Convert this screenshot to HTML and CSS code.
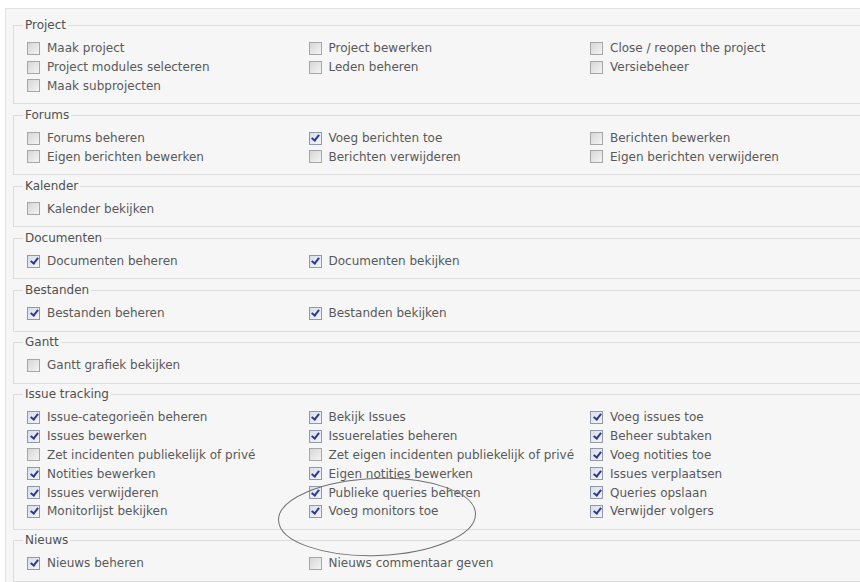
FILE: index.html
```html
<!DOCTYPE html>
<html lang="nl">
<head>
    <meta charset="UTF-8">
    <meta name="viewport" content="width=device-width, initial-scale=1.0">
    <title>Rechten</title>
    <link rel="stylesheet" href="styles.css">
</head>
<body>
<div class="permissions">
    <fieldset class="group">
        <legend>Project</legend>
        <div class="perm-grid">
            <label class="perm"><span class="box"></span>Maak project</label>
            <label class="perm"><span class="box"></span>Project bewerken</label>
            <label class="perm"><span class="box"></span>Close / reopen the project</label>
            <label class="perm"><span class="box"></span>Project modules selecteren</label>
            <label class="perm"><span class="box"></span>Leden beheren</label>
            <label class="perm"><span class="box"></span>Versiebeheer</label>
            <label class="perm"><span class="box"></span>Maak subprojecten</label>
        </div>
    </fieldset>

    <fieldset class="group">
        <legend>Forums</legend>
        <div class="perm-grid">
            <label class="perm"><span class="box"></span>Forums beheren</label>
            <label class="perm"><span class="box on"></span>Voeg berichten toe</label>
            <label class="perm"><span class="box"></span>Berichten bewerken</label>
            <label class="perm"><span class="box"></span>Eigen berichten bewerken</label>
            <label class="perm"><span class="box"></span>Berichten verwijderen</label>
            <label class="perm"><span class="box"></span>Eigen berichten verwijderen</label>
        </div>
    </fieldset>

    <fieldset class="group">
        <legend>Kalender</legend>
        <div class="perm-grid">
            <label class="perm"><span class="box"></span>Kalender bekijken</label>
        </div>
    </fieldset>

    <fieldset class="group">
        <legend>Documenten</legend>
        <div class="perm-grid">
            <label class="perm"><span class="box on"></span>Documenten beheren</label>
            <label class="perm"><span class="box on"></span>Documenten bekijken</label>
        </div>
    </fieldset>

    <fieldset class="group">
        <legend>Bestanden</legend>
        <div class="perm-grid">
            <label class="perm"><span class="box on"></span>Bestanden beheren</label>
            <label class="perm"><span class="box on"></span>Bestanden bekijken</label>
        </div>
    </fieldset>

    <fieldset class="group">
        <legend>Gantt</legend>
        <div class="perm-grid">
            <label class="perm"><span class="box"></span>Gantt grafiek bekijken</label>
        </div>
    </fieldset>

    <fieldset class="group">
        <legend>Issue tracking</legend>
        <div class="perm-grid">
            <label class="perm"><span class="box on"></span>Issue-categorieën beheren</label>
            <label class="perm"><span class="box on"></span>Bekijk Issues</label>
            <label class="perm"><span class="box on"></span>Voeg issues toe</label>
            <label class="perm"><span class="box on"></span>Issues bewerken</label>
            <label class="perm"><span class="box on"></span>Issuerelaties beheren</label>
            <label class="perm"><span class="box on"></span>Beheer subtaken</label>
            <label class="perm"><span class="box"></span>Zet incidenten publiekelijk of privé</label>
            <label class="perm"><span class="box"></span>Zet eigen incidenten publiekelijk of privé</label>
            <label class="perm"><span class="box on"></span>Voeg notities toe</label>
            <label class="perm"><span class="box on"></span>Notities bewerken</label>
            <label class="perm"><span class="box on"></span>Eigen notities bewerken</label>
            <label class="perm"><span class="box on"></span>Issues verplaatsen</label>
            <label class="perm"><span class="box on"></span>Issues verwijderen</label>
            <label class="perm"><span class="box on"></span>Publieke queries beheren</label>
            <label class="perm"><span class="box on"></span>Queries opslaan</label>
            <label class="perm"><span class="box on"></span>Monitorlijst bekijken</label>
            <label class="perm"><span class="box on"></span>Voeg monitors toe</label>
            <label class="perm"><span class="box on"></span>Verwijder volgers</label>
        </div>
    </fieldset>

    <fieldset class="group">
        <legend>Nieuws</legend>
        <div class="perm-grid">
            <label class="perm"><span class="box on"></span>Nieuws beheren</label>
            <label class="perm"><span class="box"></span>Nieuws commentaar geven</label>
        </div>
    </fieldset>
</div>

<!-- handgetekende markering rond "Voeg monitors toe" -->
<svg class="circle-mark" width="210" height="90" viewBox="0 0 210 90">
    <ellipse cx="105" cy="45" rx="98.5" ry="38.5" transform="rotate(-2 105 45)"
             fill="none" stroke="#6f6f6f" stroke-width="1"/>
</svg>
</body>
</html>
```

FILE: styles.css
```css
/* Algemeen */
body {
    margin: 0;
    background-color: #ffffff;
    font-family: "DejaVu Sans", Verdana, sans-serif;
    font-size: 12px;
    color: #595959;
    overflow: hidden;
    position: relative;
    height: 582px;
}

.permissions {
    width: 900px;
    margin: 8px 0 0 5px;
    padding: 9px 7px 0 7px;
    background-color: #f6f6f6;
    border: 1px solid #e2e2e2;
    border-right: none;
}

/* Groepen */
.group {
    margin: 0 0 3.3px 0;
    padding: 6px 0 8px 11px;
    border: 1px solid #dcdcdc;
    border-right: none;
    min-width: 0;
}

.group legend {
    padding: 0 2px;
    margin-left: -2px;
    line-height: 15px;
    color: #505050;
}

.perm-grid {
    display: grid;
    grid-template-columns: 281.5px 281.5px 281.5px;
}

.perm {
    display: flex;
    align-items: center;
    height: 18.8px;
    padding-left: 2px;
    white-space: nowrap;
}

/* Checkboxen */
.box {
    position: relative;
    display: inline-block;
    width: 11px;
    height: 11px;
    margin-right: 7px;
    border: 1px solid #a6a6a6;
    background: linear-gradient(135deg, #d6d6d6, #f4f4f4);
    flex-shrink: 0;
}

.box.on {
    border-color: #9198a8;
    background: linear-gradient(135deg, #dadeec, #f3f4f8);
}

.box.on::after {
    content: "";
    position: absolute;
    left: 3.5px;
    top: 0.5px;
    width: 2.5px;
    height: 6px;
    border: solid #2b3c8a;
    border-width: 0 2px 2px 0;
    transform: rotate(38deg);
}

/* Markering */
.circle-mark {
    position: absolute;
    left: 272px;
    top: 472px;
}
```
